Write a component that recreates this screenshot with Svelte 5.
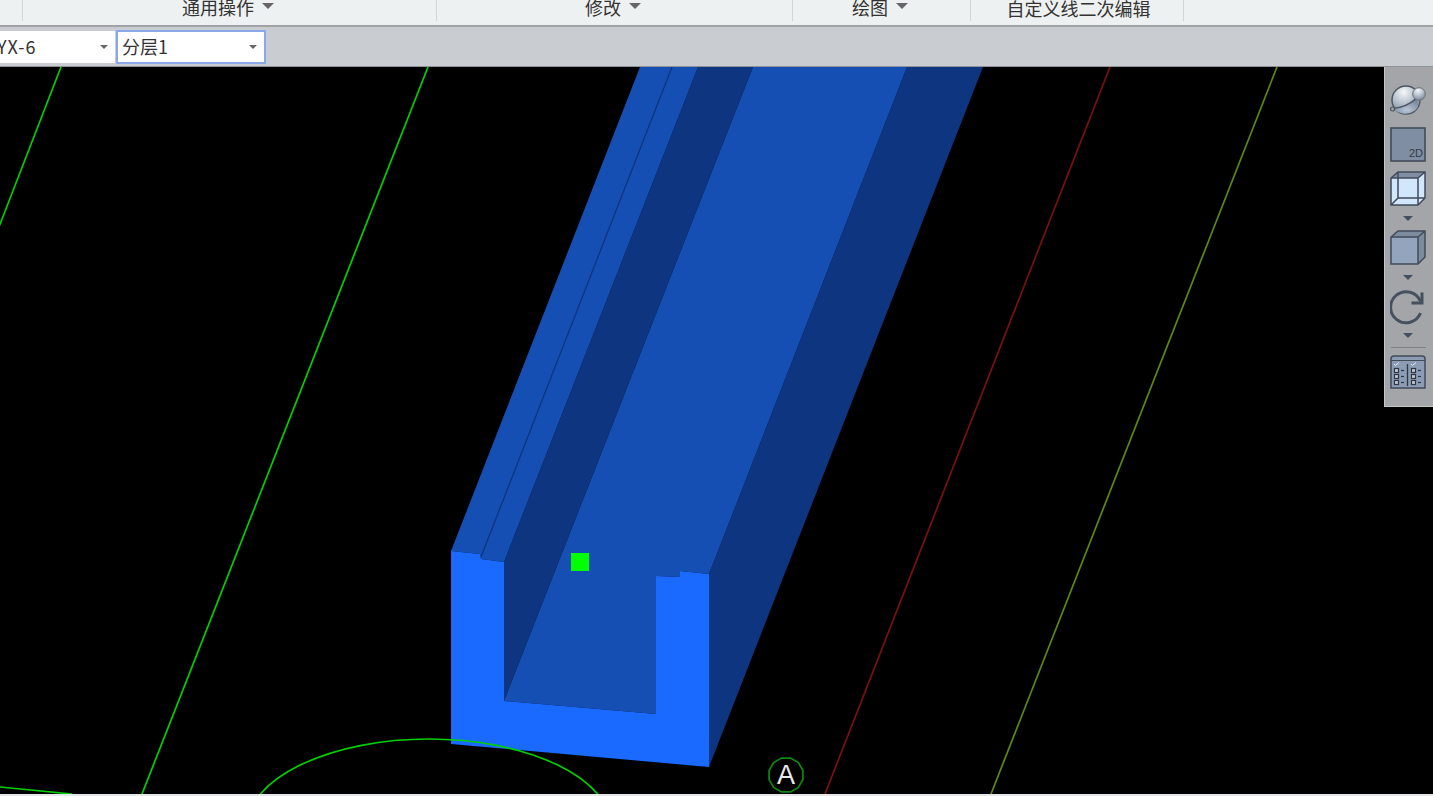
<script lang="ts">
  const groups = [
    { label: '', width: 23 },
    { label: '通用操作', width: 414, menu: true },
    { label: '修改', width: 356, menu: true },
    { label: '绘图', width: 178, menu: true },
    { label: '自定义线二次编辑', width: 213, low: true }
  ];

  // wall outline of the beam, front face first
  const front =
    '451,551 480,554 481,559 504,562 504,701 656,714 656,576 680,577 680,571 709,574 709,767 451,744';
  const floor = '504,701 753,67 907,67 709,574 680,571 680,577 656,576 656,714';
  const innerWall = '504,562 698,67 753,67 504,701';
  const sideWall = '709,574 907,67 983,67 709,767';
  const leftTop = '451,551 640,67 698,67 504,562 481,559 480,554';

  const octagon = Array.from({ length: 12 }, (_, i) => {
    const a = (i / 12) * Math.PI * 2 + Math.PI / 12;
    return `${(786 + 17.5 * Math.cos(a)).toFixed(1)},${(775 + 17.5 * Math.sin(a)).toFixed(1)}`;
  }).join(' ');

  const checkRows = [14, 20, 26];
</script>

<main class="window">
  <header class="ribbon">
    {#each groups as group}
      <div class="group" class:menu={group.menu} class:low={group.low} style={`width: ${group.width}px`}>
        {#if group.label}
          <span class="group-label">{group.label}</span>
        {/if}
        {#if group.menu}
          <i class="caret ribbon-caret"></i>
        {/if}
      </div>
    {/each}
  </header>

  <div class="toolbar">
    <div class="select first">
      <span>YX-6</span>
      <i class="caret"></i>
    </div>
    <div class="select active">
      <span>分层1</span>
      <i class="caret"></i>
    </div>
  </div>

  <section class="canvas">
    <svg class="scene" viewBox="0 67 1433 727" aria-label="3D view">
      <polyline class="axis green" points="61,67 -3,232" />
      <polyline class="axis green" points="428,67 142,794" />
      <polyline class="axis red" points="1110,67 825,794" />
      <polyline class="axis olive" points="1277,67 991,794" />
      <polyline class="axis green" points="0,787 72,794" />

      <polygon class="dark" points={innerWall} />
      <polygon class="dark" points={sideWall} />
      <polygon class="mid" points={floor} />
      <polygon class="mid" points={leftTop} />
      <polyline class="groove" points="481,557 672,67" />
      <polygon class="face" points={front} />

      <ellipse class="axis green" cx="429" cy="829" rx="183" ry="90" />
      <rect class="grip" x="571" y="553" width="18" height="18" />

      <polygon class="axis marker" points={octagon} />
      <text class="marker-label" x="786" y="784" text-anchor="middle">A</text>
    </svg>

    <aside class="palette">
      <svg class="icon globe" viewBox="0 0 36 32">
        <defs>
          <radialGradient id="ball" cx="0.42" cy="0.22" r="0.85">
            <stop offset="0" stop-color="#f4f6f8" />
            <stop offset="0.5" stop-color="#b4bfcc" />
            <stop offset="1" stop-color="#6d7c92" />
          </radialGradient>
          <radialGradient id="lower" cx="0.55" cy="0.75" r="0.7">
            <stop offset="0" stop-color="#b9c6d6" />
            <stop offset="1" stop-color="#74839a" />
          </radialGradient>
        </defs>
        <circle cx="16" cy="16" r="14" fill="url(#ball)" stroke="#4e5560" stroke-width="1.4" />
        <path d="M3 24.500Q17 23 26 14.500 31 22 25 26.500 19 30.500 13 29.600 6 28 3 24.500Z" fill="url(#lower)" />
        <path d="M3 24.500Q17 23 26 14.500" fill="none" stroke="#4e5560" stroke-width="1.6" />
        <circle cx="2.500" cy="25" r="2" fill="#a3a5a8" stroke="#4e5560" stroke-width="1.2" />
        <circle cx="29" cy="10" r="6.300" fill="url(#ball)" stroke="#6a717b" />
      </svg>

      <svg class="icon flat" viewBox="0 0 36 35">
        <rect x="1" y="1" width="34" height="33" fill="#7f8ea3" stroke="#414b59" stroke-width="1.6" />
        <text x="33" y="30" text-anchor="end" class="flat-label">2D</text>
      </svg>

      <svg class="icon cube" viewBox="0 0 36 35">
        <path d="M1 7 8 1H35V27L28 34H1Z" fill="#d2e6fc" />
        <path d="M1 7 8 1H35L28 7Z" fill="#7f8ea3" />
        <path d="M1 7 8 1H35V27L28 34H1ZM1 7H28V34M28 7 35 1M8 1V27H35M8 27 1 34" fill="none" stroke="#414b59" stroke-width="1.5" />
      </svg>
      <i class="caret tool-caret"></i>

      <svg class="icon cube" viewBox="0 0 36 35">
        <path d="M1 7H28V34H1Z" fill="#93a5bd" />
        <path d="M1 7 8 1H35V27L28 34V7Z" fill="#7d8b9f" />
        <path d="M1 7 8 1H35V27L28 34H1ZM1 7H28V34M28 7 35 1" fill="none" stroke="#414b59" stroke-width="1.5" />
      </svg>
      <i class="caret tool-caret"></i>

      <svg class="icon rotate" viewBox="0 0 36 36">
        <path d="M30.500 24A15.500 15.500 0 1 1 30.500 12.500" fill="none" stroke="#46505e" stroke-width="3" />
        <path d="M32 3.500V14H21.500" fill="none" stroke="#46505e" stroke-width="3" />
      </svg>
      <i class="caret tool-caret"></i>

      <hr class="palette-rule" />

      <svg class="icon checks" viewBox="0 0 36 35">
        <path d="M1 5Q1 2 4 2H32Q35 2 35 5V34H1Z" fill="#8b9cb4" stroke="#414b59" stroke-width="1.5" />
        <path d="M1 6.500H35" stroke="#414b59" stroke-width="1" />
        <path d="M17.500 10V32" stroke="#2f3844" stroke-width="1.3" />
        <path d="M4 10l1.500 1.500L9 8.500M21 10l1.500 1.500L26 8.500" fill="none" stroke="#e8edf2" stroke-width="1" />
        {#each checkRows as y}
          <rect x="4.500" y={y + 0.5} width="4" height="4" fill="#c4ccd6" stroke="#2f3844" stroke-width="1.2" />
          <path d={`M11 ${y + 2.5}h3`} stroke="#2f3844" stroke-width="1.2" />
          <rect x="21.500" y={y + 0.5} width="4" height="4" fill="#c4ccd6" stroke="#2f3844" stroke-width="1.2" />
          <path d={`M28 ${y + 2.5}h3`} stroke="#2f3844" stroke-width="1.2" />
        {/each}
      </svg>
    </aside>
  </section>

  <footer class="status"></footer>
</main>

<style>
  :global(body) {
    margin: 0;
    overflow: hidden;
  }

  .window {
    height: 796px;
    display: flex;
    flex-direction: column;
    font-family: "Noto Sans CJK SC", "Liberation Sans", sans-serif;
    color: #333;
  }

  .ribbon {
    height: 25px;
    flex: none;
    display: flex;
    overflow: hidden;
    background: #eef1f1;
    border-bottom: 2px solid #a0a3a5;
  }

  .group {
    flex: none;
    height: 21px;
    box-sizing: border-box;
    border-right: 1px solid #d2d5d6;
    display: flex;
    justify-content: center;
    align-items: center;
    gap: 8px;
  }

  .group.menu {
    padding-right: 3px;
  }

  .group.low {
    padding-left: 3px;
  }

  .group-label {
    font-size: 18px;
    line-height: 18px;
    margin-top: -8px;
    white-space: nowrap;
  }

  .group.low .group-label {
    margin-top: -5px;
  }

  .caret {
    width: 0;
    height: 0;
    flex: none;
    display: block;
    border-left: 6px solid transparent;
    border-right: 6px solid transparent;
    border-top: 6px solid #666;
  }

  .ribbon-caret {
    margin-top: -9px;
  }

  .toolbar {
    height: 39px;
    flex: none;
    display: flex;
    align-items: center;
    gap: 1px;
    background: #c9ccd0;
    border-bottom: 1px solid #8f9296;
  }

  .select {
    height: 32px;
    box-sizing: border-box;
    background: #fff;
    display: flex;
    align-items: center;
    justify-content: space-between;
    font-size: 18px;
    padding: 0 7px 0 4px;
  }

  .select span {
    margin-top: -2px;
  }

  .select .caret {
    border-left-width: 4px;
    border-right-width: 4px;
    border-top-width: 4px;
  }

  .first {
    width: 115px;
    padding-left: 0;
  }

  .first span {
    margin-left: -3px;
    letter-spacing: 1px;
  }

  .active {
    width: 150px;
    height: 34px;
    border: 2px solid #8aa8e8;
  }

  .canvas {
    flex: 1;
    min-height: 0;
    position: relative;
    background: #000;
  }

  .scene {
    width: 100%;
    height: 100%;
    display: block;
  }

  .axis {
    fill: none;
    stroke-width: 1.7;
  }

  .green {
    stroke: #00d000;
  }

  .red {
    stroke: #7a1010;
  }

  .olive {
    stroke: #5c8a10;
  }

  .marker {
    stroke: #0d8a0d;
  }

  .marker-label {
    fill: #e8e8e8;
    font-family: "Liberation Sans", sans-serif;
    font-size: 27px;
  }

  .face {
    fill: #1a6aff;
  }

  .mid {
    fill: #154fb4;
  }

  .dark {
    fill: #0d3580;
  }

  .groove {
    fill: none;
    stroke: #0d3580;
    stroke-width: 1.3;
  }

  .grip {
    fill: #00ff00;
  }

  .palette {
    position: absolute;
    top: 0;
    right: 0;
    width: 49px;
    height: 340px;
    box-sizing: border-box;
    padding: 17px 2px 0 0;
    background: #a3a5a8;
    border-left: 1px solid #c4c6c8;
    border-bottom: 1px solid #c4c6c8;
    display: flex;
    flex-direction: column;
    align-items: center;
  }

  .icon {
    display: block;
    width: 36px;
    flex: none;
  }

  .globe {
    height: 32px;
  }

  .flat {
    height: 35px;
    margin-top: 11px;
  }

  .flat-label {
    fill: #333b47;
    font-family: "Liberation Sans", sans-serif;
    font-size: 11px;
  }

  .cube {
    height: 35px;
    margin-top: 9px;
  }

  .tool-caret {
    margin-top: 10px;
    border-left-width: 5px;
    border-right-width: 5px;
    border-top-width: 5px;
    border-top-color: #44505e;
  }

  .rotate {
    height: 36px;
    margin-top: 9px;
  }

  .rotate + .tool-caret {
    margin-top: 8px;
  }

  .palette-rule {
    width: 35px;
    height: 1px;
    margin: 9px 0 6px;
    border: 0;
    background: #7f8285;
  }

  .checks {
    height: 35px;
  }

  .status {
    height: 2px;
    flex: none;
    background: #e6e7e8;
  }
</style>
